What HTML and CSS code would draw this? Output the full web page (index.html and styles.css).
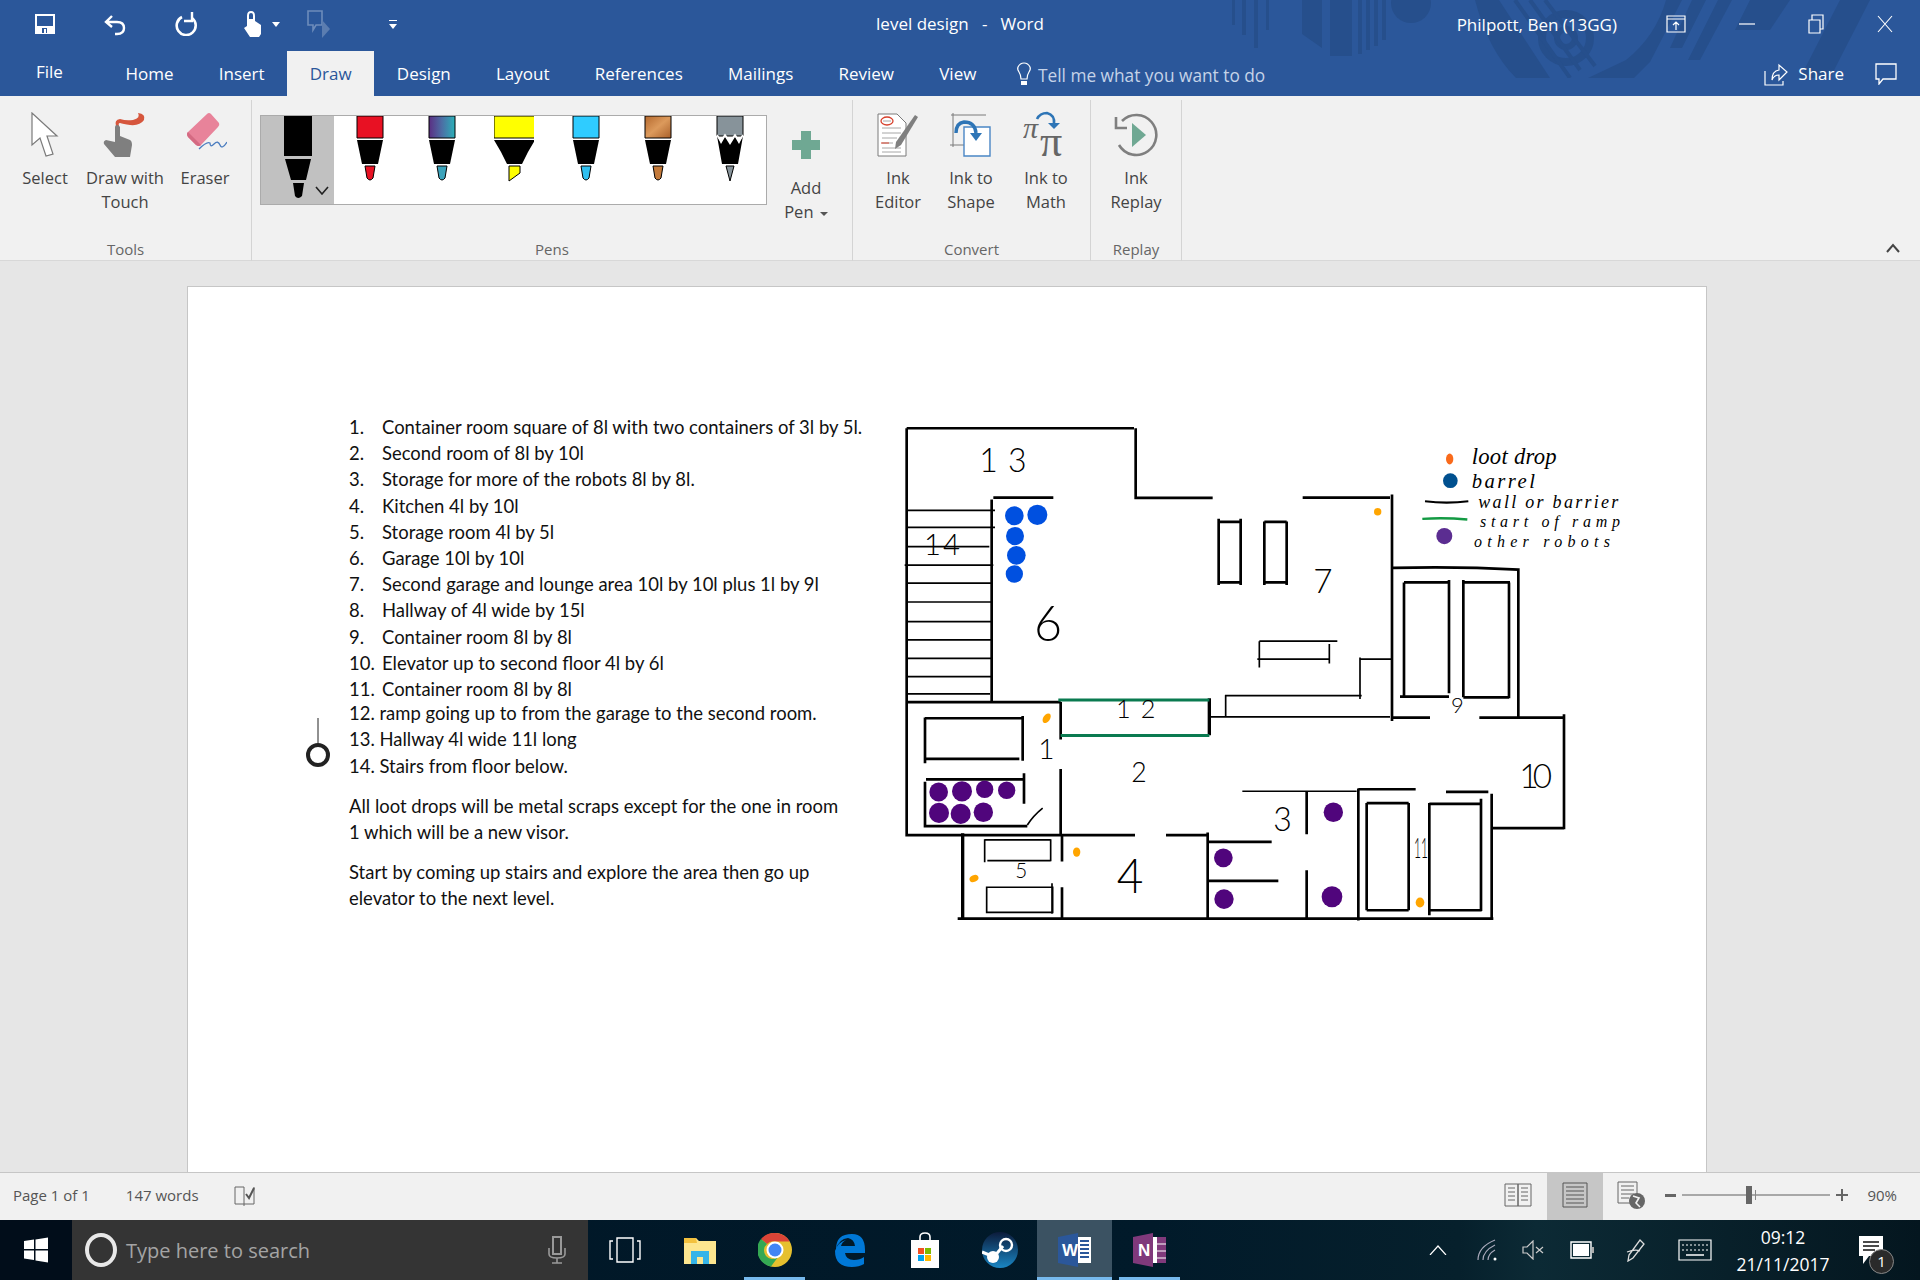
FILE: index.html
```html
<!DOCTYPE html>
<html lang="en">
<head>
    <meta charset="UTF-8">
    <title>level design - Word</title>
    <link rel="stylesheet" href="styles.css">
</head>
<body>
    <header class="titlebar">
        <!-- circuit pattern behind the title -->
        <svg class="title-art" viewBox="0 0 690 78" width="690" height="78">
            <g fill="#264f8c">
                <rect x="2" y="0" width="3" height="25"/><rect x="12" y="0" width="4" height="35"/><rect x="24" y="0" width="4" height="48"/><rect x="36" y="0" width="3" height="30"/>
                <path d="M72 0H92V48L72 34Z"/>
                <path d="M100 0H122V56H100Z"/>
                <rect x="128" y="0" width="4" height="54"/><rect x="136" y="0" width="4" height="50"/><rect x="144" y="0" width="4" height="46"/><rect x="152" y="0" width="4" height="40"/>
                <circle cx="181" cy="3" r="20"/>
                <path d="M245 0H269L320 78H286Q258 50 245 0Z"/>
                <path d="M436 0H452L420 62L404 78H358L396 60Q426 36 436 0Z"/>
                <path d="M462 0H476L452 48H440Z"/><path d="M488 0H502L470 60H458Z"/><path d="M520 0H560L540 30H505Z"/>
                <path d="M610 0H640L600 78H570Z"/>
            </g>
            <g fill="none" stroke="#264f8c">
                <circle cx="336" cy="38" r="24" stroke-width="8"/>
                <circle cx="336" cy="38" r="9" stroke-width="6"/>
                <path d="M285 0L340 78M300 0L350 70M315 0L365 66" stroke-width="4"/>
            </g>
        </svg>

        <div class="qat">
            <svg class="qat-icon" width="20" height="20" viewBox="0 0 20 20"><path d="M1 1H19V19H1Z" fill="none" stroke="#fff" stroke-width="2"/><path d="M1 12H19V19H1Z" fill="#fff"/><path d="M7 14H12V19H7Z" fill="#2b579a"/><path d="M9 15H11V19H9Z" fill="#fff"/></svg>
            <svg class="qat-icon" width="24" height="24" viewBox="0 0 24 24"><path d="M9 4L3 10L9 15M3 10H14Q21 10 21 16T14 22H12" fill="none" stroke="#fff" stroke-width="2.4"/></svg>
            <svg class="qat-icon" width="24" height="24" viewBox="0 0 24 24"><path d="M8 5A9.500 9.500 0 1 0 18 6" fill="none" stroke="#fff" stroke-width="2.6"/><path d="M18 0V9H10" fill="none" stroke="#fff" stroke-width="2.4"/></svg>
            <svg class="qat-icon" width="22" height="28" viewBox="0 0 22 28"><path d="M6 6Q6 1 10 1T14 6V11L20 15V24L18 27H9L3 18L6 16Z" fill="#fff"/><path d="M8 5Q8 3 10 3T12 5V9H8Z" fill="#2b579a"/></svg>
            <span class="qat-caret"></span>
            <svg class="qat-icon qat-off" width="26" height="28" viewBox="0 0 26 28"><path d="M2 1H16V15H10L7 20V15H2Z" fill="none" stroke="#6d8cbb" stroke-width="1.6"/><path d="M16 10L24 19L16 28Z" fill="#5b7db0"/></svg>
            <span class="qat-more"></span>
        </div>

        <div class="doc-title">level design &nbsp;&nbsp;- &nbsp;&nbsp;Word</div>

        <div class="win-controls">
            <span class="account">Philpott, Ben (13GG)</span>
            <svg class="win-btn win-display" width="20" height="18" viewBox="0 0 20 18"><path d="M1 1H19V17H1ZM1 4H19M10 15V7M7 10L10 7L13 10" fill="none" stroke="#fff" stroke-width="1.2"/></svg>
            <svg class="win-btn" width="16" height="16" viewBox="0 0 16 16"><path d="M0 8H16" stroke="#fff" stroke-width="1.2"/></svg>
            <svg class="win-btn" width="16" height="20" viewBox="0 0 16 20"><path d="M1 6H12V19H1ZM4 6V1H15V15H12" fill="none" stroke="#fff" stroke-width="1.2"/></svg>
            <svg class="win-btn" width="16" height="18" viewBox="0 0 16 18"><path d="M1 1L15 17M15 1L1 17" stroke="#fff" stroke-width="1.1"/></svg>
        </div>

        <nav class="tabs">
            <span class="tab tab-file">File</span>
            <span class="tab">Home</span>
            <span class="tab">Insert</span>
            <span class="tab tab-active">Draw</span>
            <span class="tab">Design</span>
            <span class="tab">Layout</span>
            <span class="tab">References</span>
            <span class="tab">Mailings</span>
            <span class="tab">Review</span>
            <span class="tab">View</span>
            <svg class="bulb" width="16" height="24" viewBox="0 0 16 24"><path d="M5 17Q5 13 3 10Q1 7 2 5Q4 1 8 1T14 5Q15 7 13 10Q11 13 11 17Z" fill="none" stroke="#fff" stroke-width="1.2"/><path d="M5 19H11V23H5Z" fill="#fff"/></svg>
            <span class="tell-me">Tell me what you want to do</span>
            <span class="share">
                <svg width="24" height="24" viewBox="0 0 24 24"><path d="M1 9V23H19V19M8 18Q8 9 15 8V3L23 10L15 18V13Q10 13 8 18Z" fill="none" stroke="#fff" stroke-width="1.2"/></svg>
                Share
            </span>
            <svg class="comment" width="22" height="22" viewBox="0 0 22 22"><path d="M1 1H21V16H8L4 21V16H1Z" fill="none" stroke="#fff" stroke-width="1.3"/></svg>
        </nav>
    </header>

    <section class="ribbon">
        <div class="group group-tools">
            <div class="group-body">
                <div class="btn btn-select">
                    <svg class="btn-icon" width="28" height="46" viewBox="0 0 28 46"><path d="M1 1V33L9 26L15 44L22 42L16 24H26Z" fill="#fff" stroke="#7a7a7a" stroke-width="1.2"/></svg>
                    <span>Select</span>
                </div>
                <div class="btn btn-touch">
                    <svg class="btn-icon" width="46" height="46" viewBox="0 0 46 46"><path d="M14 14Q12 8 18 7Q24 9 31 8Q39 6 36 1Q44 2 42 8Q38 14 28 13Q21 12 18 11Q16 11 17 14Z" fill="#d6563d"/><path d="M13 15Q13 13 15 13T18 15V24L28 28Q30 29 30 33L28 45H13L2 32Q1 29 4 28L13 30Z" fill="#7f7f7f"/></svg>
                    <span>Draw with Touch</span>
                </div>
                <div class="btn btn-eraser">
                    <svg class="btn-icon" width="44" height="46" viewBox="0 0 44 46"><path d="M24 2Q26 0 28 2L36 11Q37 13 35 15L18 33Q16 35 13 33L5 25Q3 22 5 20Z" fill="#e8839a"/><path d="M5 20L18 33Q16 35 13 33L5 25Q3 22 5 20Z" fill="#d46a82"/><path d="M16 37Q24 29 27 31Q27 36 31 32T37 33T44 30" fill="none" stroke="#4a7cbf" stroke-width="1.3"/></svg>
                    <span>Eraser</span>
                </div>
            </div>
            <div class="group-label">Tools</div>
        </div>

        <div class="group group-pens">
            <div class="group-body">
                <div class="gallery">
                    <div class="pen-slot pen-current">
                        <svg width="40" height="88" viewBox="0 0 40 88"><path d="M6 0H34V40H6ZM7 43H33L28 64H13ZM15 67H26L24 80Q20 84 17 80Z" fill="#000"/></svg>
                        <svg class="pen-chevron" width="14" height="9" viewBox="0 0 14 9"><path d="M1 1L7 8L13 1" fill="none" stroke="#222" stroke-width="1.6"/></svg>
                    </div>
                    <div class="pen-slot">
                        <svg width="40" height="88" viewBox="0 0 40 88"><path d="M7 0H33V22H7Z" fill="#e81123" stroke="#000"/><path d="M7 24H33L28 48H12Z"/><path d="M15 50H25L23 62Q20 66 17 62Z" fill="#e81123" stroke="#000"/></svg>
                    </div>
                    <div class="pen-slot">
                        <svg width="40" height="88" viewBox="0 0 40 88"><defs><linearGradient id="galaxy" x1="0" x2="1" y1="0" y2="0"><stop offset="0" stop-color="#5b2e83"/><stop offset=".5" stop-color="#4c6fa5"/><stop offset="1" stop-color="#2bb0b8"/></linearGradient></defs><path d="M7 0H33V22H7Z" fill="url(#galaxy)" stroke="#000"/><path d="M7 24H33L28 48H12Z"/><path d="M15 50H25L23 62Q20 66 17 62Z" fill="#3ba3bb" stroke="#000"/></svg>
                    </div>
                    <div class="pen-slot">
                        <svg width="40" height="88" viewBox="0 0 40 88"><path d="M0 0H41V22H0Z" fill="#ffff00" stroke="#000"/><path d="M0 24H41L34 36L28 48H13L7 36Z"/><path d="M15 50H26V57L15 65Z" fill="#ffff00" stroke="#000"/></svg>
                    </div>
                    <div class="pen-slot">
                        <svg width="40" height="88" viewBox="0 0 40 88"><path d="M7 0H33V22H7Z" fill="#2fccff" stroke="#000"/><path d="M7 24H33L28 48H12Z"/><path d="M15 50H25L23 62Q20 66 17 62Z" fill="#2fc0f0" stroke="#000"/></svg>
                    </div>
                    <div class="pen-slot">
                        <svg width="40" height="88" viewBox="0 0 40 88"><defs><linearGradient id="wood" x1="0" x2="1" y1="0" y2="1"><stop offset="0" stop-color="#b5692e"/><stop offset=".5" stop-color="#dc9a5c"/><stop offset="1" stop-color="#a9602a"/></linearGradient></defs><path d="M7 0H33V22H7Z" fill="url(#wood)" stroke="#000"/><path d="M7 24H33L28 48H12Z"/><path d="M15 50H25L23 62Q20 66 17 62Z" fill="#c47a3a" stroke="#000"/></svg>
                    </div>
                    <div class="pen-slot">
                        <svg width="40" height="88" viewBox="0 0 40 88"><path d="M7 0H33V20H7Z" fill="#87939a" stroke="#000"/><path d="M7 20L11 28L15 21L20 29L25 21L29 28L33 20L28 48H12Z"/><path d="M7 19L11 25L15 19L20 26L25 19L29 25L33 19" fill="none" stroke="#fff" stroke-width="1.6"/><path d="M16 50H24L20 65Z" fill="#87939a" stroke="#000"/></svg>
                    </div>
                </div>
                <div class="btn btn-add">
                    <svg class="btn-icon" width="28" height="28" viewBox="0 0 28 28"><path d="M9 0H19V9H28V19H19V28H9V19H0V9H9Z" fill="#6fa893"/></svg>
                    <span>Add<br>Pen <i class="caret"></i></span>
                </div>
            </div>
            <div class="group-label">Pens</div>
        </div>

        <div class="group group-convert">
            <div class="group-body">
                <div class="btn btn-editor">
                    <svg class="btn-icon" width="42" height="44" viewBox="0 0 42 44"><path d="M1 1H20L29 10V43H1Z" fill="#fff" stroke="#7a7a7a"/><ellipse cx="10" cy="8" rx="6" ry="4" fill="none" stroke="#d6402c" stroke-width="1.3"/><path d="M6 8H14M5 15H24M5 20H24M5 25H20M5 30H16M5 35H24M5 39H24" stroke="#a6a6a6"/><path d="M4 30H12" stroke="#d6402c"/><path d="M38 2L41 4L24 32L18 36L19 29Z" fill="#7f7f7f"/></svg>
                    <span>Ink<br>Editor</span>
                </div>
                <div class="btn btn-shape">
                    <svg class="btn-icon" width="42" height="44" viewBox="0 0 42 44"><path d="M1 2H36M3 0V34M0 32H14" stroke="#7a7a7a" fill="none"/><path d="M14 14H40V43H14Z" fill="#fff" stroke="#4a86c5" stroke-width="1.4"/><path d="M6 20Q6 10 14 9Q25 9 26 20" fill="none" stroke="#2e75b6" stroke-width="3.4"/><path d="M20 20H32L26 28Z" fill="#2e75b6"/></svg>
                    <span>Ink to<br>Shape</span>
                </div>
                <div class="btn btn-math">
                    <svg class="btn-icon" width="46" height="62" viewBox="0 -8 46 62"><text class="math-small" x="0" y="26">π</text><text class="math-big" x="17" y="44">π</text><path d="M14 7Q17 1 24 1Q32 3 31 12" fill="none" stroke="#2e75b6" stroke-width="2.6"/><path d="M25 11H37L31 17Z" fill="#2e75b6"/></svg>
                    <span>Ink to<br>Math</span>
                </div>
            </div>
            <div class="group-label">Convert</div>
        </div>

        <div class="group group-replay">
            <div class="group-body">
                <div class="btn btn-replay">
                    <svg class="btn-icon" width="44" height="44" viewBox="0 0 44 44"><path d="M8 8A20 20 0 1 1 5 32" fill="none" stroke="#7f7f7f" stroke-width="2.6"/><path d="M2 4V15H13" fill="none" stroke="#7f7f7f" stroke-width="2.6"/><path d="M18 10L32 22L18 34Z" fill="#6fa893"/></svg>
                    <span>Ink<br>Replay</span>
                </div>
            </div>
            <div class="group-label">Replay</div>
        </div>

        <svg class="ribbon-collapse" width="14" height="10" viewBox="0 0 14 10"><path d="M1 9L7 2L13 9" fill="none" stroke="#444" stroke-width="2"/></svg>
    </section>

    <main class="doc-area">
        <article class="page">
            <!-- ink cursor sitting in the margin -->
            <svg class="ink-handle" width="24" height="50" viewBox="0 0 24 50"><path d="M12 0V25" stroke="#222"/><circle cx="12" cy="37" r="10" fill="none" stroke="#222" stroke-width="4"/></svg>

            <div class="doc-text">
                <ol class="room-list">
                    <li><b>1.</b>Container room square of 8l with two containers of 3l by 5l.</li>
                    <li><b>2.</b>Second room of 8l by 10l</li>
                    <li><b>3.</b>Storage for more of the robots 8l by 8l.</li>
                    <li><b>4.</b>Kitchen 4l by 10l</li>
                    <li><b>5.</b>Storage room 4l by 5l</li>
                    <li><b>6.</b>Garage 10l by 10l</li>
                    <li><b>7.</b>Second garage and lounge area 10l by 10l plus 1l by 9l</li>
                    <li><b>8.</b>Hallway of 4l wide by 15l</li>
                    <li><b>9.</b>Container room 8l by 8l</li>
                    <li><b>10.</b>Elevator up to second floor 4l by 6l</li>
                    <li><b>11.</b>Container room 8l by 8l</li>
                </ol>
                <div class="room-extra">
                    <p>12. ramp going up to from the garage to the second room.</p>
                    <p>13. Hallway 4l wide 11l long</p>
                    <p>14. Stairs from floor below.</p>
                </div>
                <p class="para">All loot drops will be metal scraps except for the one in room 1 which will be a new visor.</p>
                <p class="para">Start by coming up stairs and explore the area then go up elevator to the next level.</p>
            </div>

            <svg class="plan" width="750" height="530" viewBox="0 0 2250 1568" preserveAspectRatio="none">
                <g class="wall">
                    <path d="M50 54H732M737 54V260H968M50 54V912M310 259H490M305 265V862M50 864H512M512 864V975M512 1062V1258M50 864V1258H735M828 1258H950M953 1250V1505"/>
                    <path d="M953 1278H1145M953 1393H1165M203 1505H1810M516 1260V1336M516 1412V1503"/>
                    <path d="M105 912H398M105 910V1045M398 905V1038M105 1032H388M108 1093H402M402 1075V1165M105 1100V1235M105 1231H412"/>
                    <path d="M1238 259H1500M1506 250V920M1510 467Q1700 462 1885 472V910M1542 510V848M1542 510H1678M1677 503V838M1530 848H1677M1720 503V850M1720 510H1860M1857 510V853M1720 850H1857"/>
                    <path d="M1506 910H1620M1768 910H2022M2022 900V1240M1805 1237H2022M1805 1135V1505M1250 1130V1255M1250 1362V1505M1405 1120V1510M1405 1122H1577M1668 1130H1795"/>
                    <path d="M1430 1163V1480M1430 1163H1556M1556 1163V1480M1430 1480H1556M1618 1163V1495M1618 1165H1775M1773 1150V1482M1618 1480H1775M986 322V518M1052 322V518M986 331H1052M986 510H1052M1123 330V518M1190 330V518M1123 331H1190M1123 510H1190"/>
                    <path class="wall-heavy" d="M218 1252V1505M958 853V962"/>
                </g>
                <g class="wall-thin">
                    <path d="M50 297H315M50 347H315M50 404H298M44 459H310M50 512H305M50 568H305M50 626H305M50 680H305M50 735H305M50 789H305M50 840H300"/>
                    <path d="M412 1228Q430 1200 458 1178M284 1272H482M284 1270V1338M482 1270V1335M292 1333H482M290 1412H488V1486H290ZM486 1400V1490"/>
                    <path d="M960 908H1500M1007 843V908M1005 845H1415M1108 684V762M1108 684H1342M1102 737H1318M1318 692V750M1410 732V855M1410 737H1505M1057 1128H1400"/>
                </g>
                <path class="ramp" d="M505 858H958M512 963H958"/>
                <g fill="#0050e0">
                    <circle cx="373" cy="313" r="28"/><circle cx="442" cy="310" r="30"/><circle cx="375" cy="373" r="27"/><circle cx="379" cy="430" r="28"/><circle cx="373" cy="485" r="26"/>
                </g>
                <g fill="#50057c">
                    <circle cx="146" cy="1130" r="28"/><circle cx="216" cy="1128" r="30"/><circle cx="284" cy="1122" r="26"/><circle cx="350" cy="1125" r="26"/><circle cx="147" cy="1192" r="30"/><circle cx="212" cy="1195" r="30"/><circle cx="280" cy="1190" r="29"/>
                    <circle cx="1000" cy="1325" r="28"/><circle cx="1002" cy="1447" r="29"/><circle cx="1330" cy="1190" r="29"/><circle cx="1326" cy="1440" r="31"/>
                </g>
                <g fill="#ffa500">
                    <ellipse cx="470" cy="912" rx="10" ry="16" transform="rotate(35 470 912)"/><ellipse cx="560" cy="1308" rx="11" ry="14"/><ellipse cx="252" cy="1386" rx="10" ry="14" transform="rotate(65 252 1386)"/><circle cx="1463" cy="301" r="11"/><ellipse cx="1590" cy="1457" rx="13" ry="15"/>
                </g>
                <g class="room-no">
                    <text font-size="96" x="268" y="182" textLength="142">13</text>
                    <text font-size="88" x="102" y="430" textLength="108">14</text>
                    <text font-size="145" x="432" y="684">6</text>
                    <text font-size="76" x="678" y="912" textLength="118">12</text>
                    <text font-size="84" x="445" y="1034">1</text>
                    <text font-size="80" x="724" y="1100">2</text>
                    <text font-size="96" x="1150" y="1245">3</text>
                    <text font-size="138" x="680" y="1428">4</text>
                    <text font-size="62" x="376" y="1386">5</text>
                    <text font-size="100" x="1270" y="542">7</text>
                    <text font-size="66" x="1683" y="896">9</text>
                    <text font-size="100" x="1888" y="1118" textLength="98">10</text>
                    <text font-size="84" x="1572" y="1325" textLength="42" lengthAdjust="spacingAndGlyphs">11</text>
                </g>
                <ellipse cx="1679" cy="145" rx="11" ry="16" fill="#f96a1b"/>
                <circle cx="1681" cy="209" r="22" fill="#00508f"/>
                <path d="M1605 270Q1670 278 1735 270" fill="none" stroke="#000" stroke-width="6"/>
                <path d="M1597 322Q1665 318 1732 324" fill="none" stroke="#139a43" stroke-width="7"/>
                <circle cx="1663" cy="373" r="24" fill="#5b2d91"/>
                <g class="legend">
                    <text font-size="68" x="1745" y="160" textLength="255">loot drop</text>
                    <text font-size="62" x="1745" y="232" textLength="190">barrel</text>
                    <text font-size="54" x="1765" y="290" textLength="420">wall or barrier</text>
                    <text font-size="48" x="1770" y="346" textLength="420">start of ramp</text>
                    <text font-size="48" x="1752" y="404" textLength="408">other robots</text>
                </g>
            </svg>
        </article>
    </main>

    <footer class="statusbar">
        <span class="status-page">Page 1 of 1</span>
        <span class="status-words">147 words</span>
        <svg class="status-proof" width="22" height="22" viewBox="0 0 22 22"><path d="M10 3H1V20H10V22M10 3V20H20V3" fill="none" stroke="#666"/><path d="M12 10L15 14L20 4" fill="none" stroke="#555" stroke-width="2"/></svg>
        <div class="status-right">
            <svg class="view-read" width="28" height="26" viewBox="0 0 28 26"><path d="M1 2H14V24H1ZM14 2H27V24H14ZM4 6H11M4 10H11M4 14H11M4 18H11M17 6H24M17 10H24M17 14H24M17 18H24" fill="none" stroke="#666"/></svg>
            <div class="view-print"><svg width="26" height="26" viewBox="0 0 26 26"><path d="M1 1H25V25H1ZM4 5H22M4 9H22M4 13H22M4 17H22M4 21H22" fill="none" stroke="#555"/></svg></div>
            <svg class="view-web" width="28" height="28" viewBox="0 0 28 28"><path d="M1 1H20V22H1ZM4 5H17M4 9H17M4 13H17M4 17H12" fill="none" stroke="#666"/><circle cx="20" cy="20" r="8" fill="#666"/><path d="M16 15L22 17L19 22L23 26" fill="none" stroke="#f1f1f1" stroke-width="1.6"/></svg>
            <div class="zoom-control">
                <span class="zoom-minus"></span>
                <div class="zoom-track"><span class="zoom-tick"></span><span class="zoom-thumb"></span></div>
                <span class="zoom-plus"></span>
            </div>
            <span class="zoom-value">90%</span>
        </div>
    </footer>

    <footer class="taskbar">
        <div class="start">
            <svg width="26" height="26" viewBox="0 0 26 26"><path d="M1 4L11 2.6V12H1ZM12.5 2.4L25 .6V12H12.5ZM1 13.5H11V23L1 21.6ZM12.5 13.5H25V25.4L12.5 23.6Z" fill="#fff"/></svg>
        </div>
        <div class="search">
            <span class="cortana"></span>
            <span class="search-text">Type here to search</span>
            <svg class="mic" width="18" height="28" viewBox="0 0 18 28"><path d="M5 1H13V18H5Z" fill="none" stroke="#999" stroke-width="2"/><path d="M1 12V18Q1 22 9 22T17 18V12M9 22V27M4 27H14" fill="none" stroke="#999" stroke-width="1.6"/></svg>
        </div>
        <div class="task-apps">
            <div class="task-app"><svg width="32" height="26" viewBox="0 0 32 26"><path d="M8 1H24V25H8ZM4 4H1V22H4M28 4H31V22H28" fill="none" stroke="#fff" stroke-width="1.4"/></svg></div>
            <div class="task-app"><svg width="32" height="28" viewBox="0 0 32 28"><path d="M0 2H12L15 5H32V28H0Z" fill="#fde68f"/><path d="M0 2H12L13 7H0Z" fill="#f3c13e"/><path d="M7 15H25V28H19V21H13V28H7Z" fill="#35b4e8"/></svg></div>
            <div class="task-app is-open">
                <svg width="34" height="34" viewBox="0 0 34 34"><circle cx="17" cy="17" r="17" fill="#e6c02e"/><path d="M17 0A17 17 0 0 1 31.700 8.500H17A8.500 8.500 0 0 0 9 11L3 6A17 17 0 0 1 17 0Z" fill="#db4437"/><path d="M3 6A17 17 0 0 0 13 33.500L20 24A8.500 8.500 0 0 1 9 11Z" fill="#34a853"/><circle cx="17" cy="17" r="8.500" fill="#fff"/><circle cx="17" cy="17" r="6.500" fill="#4285f4"/></svg>
            </div>
            <div class="task-app"><svg width="32" height="34" viewBox="0 0 32 34"><path d="M2 16Q2 1 18 1Q31 1 31 17V20H11Q12 27 20 27Q26 27 30 24V31Q25 34 18 34Q1 34 1 18Q4 9 12 7Q8 9 7 13H21Q20 6 14 5Q5 6 2 16Z" fill="#0078d7"/></svg></div>
            <div class="task-app"><svg width="28" height="36" viewBox="0 0 28 36"><path d="M0 8H28V36H0Z" fill="#fff"/><path d="M9 9V5Q9 1 14 1T19 5V9" fill="none" stroke="#fff" stroke-width="1.6"/><path d="M7 16H13V22H7Z" fill="#f25022"/><path d="M14 16H20V22H14Z" fill="#7fba00"/><path d="M7 23H13V29H7Z" fill="#00a4ef"/><path d="M14 23H20V29H14Z" fill="#ffb900"/></svg></div>
            <div class="task-app"><svg width="36" height="36" viewBox="0 0 36 36"><defs><linearGradient id="steam" x1="0" x2="0" y1="0" y2="1"><stop offset="0" stop-color="#0c1b3a"/><stop offset="1" stop-color="#1a86c4"/></linearGradient></defs><circle cx="18" cy="18" r="18" fill="url(#steam)"/><path d="M0 20L12 25L21 14" fill="none" stroke="#fff" stroke-width="3"/><circle cx="24" cy="13" r="6" fill="none" stroke="#fff" stroke-width="2.4"/><circle cx="11" cy="25" r="6" fill="#fff"/></svg></div>
            <div class="task-app is-active"><svg width="34" height="34" viewBox="0 0 34 34"><path d="M20 0V34L0 30V4Z" fill="#2b579a"/><path d="M20 4H33V30H20Z" fill="#fff"/><path d="M22 8H31M22 12H31M22 16H31M22 20H31M22 24H31" stroke="#2b579a" stroke-width="2"/><text class="app-letter" x="4" y="23">W</text></svg></div>
            <div class="task-app is-open"><svg width="34" height="34" viewBox="0 0 34 34"><path d="M20 0V34L0 30V4Z" fill="#80397b"/><path d="M20 4H33V30H20Z" fill="#fff"/><path d="M24 4H33V30H24Z" fill="#80397b"/><path d="M24 11H33M24 18H33M24 25H33" stroke="#fff"/><text class="app-letter" x="5" y="23">N</text></svg></div>
        </div>
        <div class="tray">
            <svg class="tray-chevron" width="18" height="10" viewBox="0 0 18 10"><path d="M1 10L9 1L17 10" fill="none" stroke="#fff" stroke-width="1.2"/></svg>
            <svg class="tray-wifi" width="20" height="22" viewBox="0 0 20 22"><path d="M1 21Q1 8 18 1M6 21Q6 12 18 6M11 21Q11 15 18 11" fill="none" stroke="#aab" stroke-width="1.2"/><circle cx="18" cy="20" r="1.500" fill="#fff"/></svg>
            <svg class="tray-volume" width="22" height="20" viewBox="0 0 22 20"><path d="M1 7H5L11 1V19L5 13H1Z" fill="none" stroke="#ccc" stroke-width="1.2"/><path d="M14 7L21 13M21 7L14 13" stroke="#ccc" stroke-width="1.2"/></svg>
            <svg class="tray-battery" width="24" height="18" viewBox="0 0 24 18"><path d="M1 1H21V17H1Z" fill="none" stroke="#fff" stroke-width="1.4"/><path d="M3 3H19V15H3Z" fill="#fff"/><path d="M22 6H24V12H22Z" fill="#aaa"/></svg>
            <svg class="tray-pen" width="20" height="24" viewBox="0 0 20 24"><path d="M14 2L18 6L7 20L2 23L3 17ZM1 14Q9 11 14 13" fill="none" stroke="#ddd" stroke-width="1.3"/></svg>
            <svg class="tray-keys" width="34" height="22" viewBox="0 0 34 22"><path d="M1 1H33V21H1Z" fill="none" stroke="#fff" stroke-width="1.2"/><path d="M4 6H30M4 11H30" stroke="#fff" stroke-dasharray="2 2"/><path d="M8 16H26" stroke="#fff" stroke-width="1.5"/></svg>
            <div class="clock"><span>09:12</span><span>21/11/2017</span></div>
            <div class="notify">
                <svg width="24" height="28" viewBox="0 0 24 28"><path d="M0 0H24V20H10L4 28V20H0Z" fill="#fff"/><path d="M4 6H20M4 10H20M4 14H16" stroke="#111" stroke-width="1.4"/></svg>
                <span class="notify-badge">1</span>
            </div>
        </div>
    </footer>
</body>
</html>
```

FILE: styles.css
```css
*{box-sizing:border-box}
html,body{margin:0;padding:0}
body{
    width:1920px;
    height:1280px;
    overflow:hidden;
    display:flex;
    flex-direction:column;
    font-family:"Open Sans","Liberation Sans",sans-serif;
    font-size:16.5px;
    color:#444;
}

/* title bar + tabs */
.titlebar{
    position:relative;
    height:96px;
    flex:none;
    background:#2b579a;
    color:#fff;
    display:grid;
    grid-template-columns:1fr auto 1fr;
    grid-template-rows:48px 48px;
}
.title-art{position:absolute;left:1230px;top:0}
.qat{position:relative;display:flex;align-items:center;height:48px}
.qat-icon{flex:none}
.qat svg:nth-child(1){margin-left:35px}
.qat svg:nth-child(2){margin-left:48px}
.qat svg:nth-child(3){margin-left:47px}
.qat svg:nth-child(4){margin-left:43px}
.qat-caret{margin-left:9px;border:4px solid transparent;border-top:5px solid #fff;border-bottom:0}
.qat-off{margin-left:26px}
.qat-more{margin-left:57px;width:8px;height:8px;border-top:1px solid #fff;position:relative}
.qat-more:after{content:"";position:absolute;left:0;top:3px;border:4px solid transparent;border-top:5px solid #fff;border-bottom:0}
.doc-title{position:relative;align-self:center;font-size:17px;text-align:center;width:190px;margin-top:-1px;white-space:nowrap}
.win-controls{position:relative;display:flex;align-items:center;justify-content:flex-end}
.account{font-size:17px;margin-right:49px}
.win-btn{flex:none;margin-right:53px}
.win-btn:last-child{margin-right:27px}

.tabs{
    position:relative;
    grid-column:1 / 4;
    display:flex;
    align-items:stretch;
    height:45px;
    margin-top:3px;
    font-size:17px;
}
.tab{padding:0 22.6px;display:flex;align-items:center;color:#fff;padding-bottom:1px}
.tab-file{padding:0 40px 4px 36px}
.tab-active{background:#f1f1f1;color:#2b579a}
.bulb{align-self:center;margin:0 0 0 17px}
.tell-me{align-self:center;margin-left:6px;color:#c5d3e8;margin-top:4px;font-size:17.3px}
.share{margin-left:auto;margin-right:31px;display:flex;align-items:center;gap:10px;font-size:17px}
.comment{align-self:center;margin-right:23px}

/* ribbon */
.ribbon{
    position:relative;
    height:165px;
    flex:none;
    background:#f1f1f1;
    border-bottom:1px solid #d8d8d8;
    display:flex;
}
.group{
    height:161px;
    margin-top:4px;
    border-right:1px solid #d4d4d4;
    display:flex;
    flex-direction:column;
}
.group-tools{width:252px}
.group-pens{width:601px}
.group-convert{width:238px}
.group-replay{width:91px}
.group-body{flex:1;display:flex;position:relative}
.group-label{height:27px;line-height:30px;text-align:center;font-size:15px;color:#666}
.btn{
    display:flex;
    flex-direction:column;
    align-items:center;
    text-align:center;
    line-height:24px;
    color:#444;
}
.btn-icon{height:46px;flex:none;margin-top:12px;margin-bottom:8px}
.btn-select{width:82px;margin-left:4px}
.btn-touch{width:88px;margin-left:-5px}
.btn-eraser{margin-left:-5px;width:78px;padding-left:4px}

.gallery{
    width:507px;
    height:90px;
    margin:15px 0 0 8px;
    background:#fff;
    border:1px solid #ababab;
    display:flex;
}
.pen-slot{width:72px;flex:none;text-align:center;height:88px}
.pen-slot svg{display:block;margin:0 auto}
.pen-current{width:73px;background:#c1c1c1;position:relative}
.pen-chevron{position:absolute;right:5px;bottom:9px}
.btn-add{width:64px;margin-left:7px}
.btn-add .btn-icon{height:28px;margin-top:31px;margin-bottom:17px}
.caret{display:inline-block;vertical-align:middle;margin-left:2px;border:4px solid transparent;border-top:4px solid #555;border-bottom:0}

.btn-editor{width:74px;margin-left:8px}
.btn-shape{width:72px}
.btn-math{width:78px}
.btn-math .btn-icon{height:62px;margin-top:4px;margin-bottom:0}
.btn-replay{width:90px}
.math-small{font:italic 30px "Liberation Serif",serif;fill:#666}
.math-big{font:44px "Liberation Serif",serif;fill:#666}
.ribbon-collapse{position:absolute;right:20px;top:147px}

/* document */
.doc-area{
    flex:1;
    min-height:0;
    background:#e6e6e6;
    padding:25px 0 0 187px;
    overflow:hidden;
}
.page{
    position:relative;
    width:1520px;
    height:900px;
    background:#fff;
    border:1px solid #c6c6c6;
    display:flex;
    padding:123px 0 0 161px;
    font-family:Lato,"Liberation Sans",sans-serif;
    font-size:18.470px;
    line-height:26.2px;
    color:#111;
}
.ink-handle{position:absolute;left:118px;top:431px}
.doc-text{width:541px;flex:none;margin-top:4px}
.room-list{list-style:none;margin:0;padding:0}
.room-list li{display:flex;white-space:nowrap}
.room-list b{font-weight:normal;width:33px;flex:none}
.room-extra{margin-top:-2px}
.room-extra p{margin:0}
.para{margin:14px 0 0;width:497px}
.plan{flex:none}
.plan .wall{fill:none;stroke:#000;stroke-width:8}
.plan .wall-heavy{stroke-width:10}
.plan .wall-thin{fill:none;stroke:#000;stroke-width:5}
.plan .ramp{fill:none;stroke:#0a7a50;stroke-width:9}
.room-no text{font-family:Lato,Roboto,sans-serif;font-weight:300;fill:#000}
.legend text{font-family:"Liberation Serif",serif;font-style:italic;fill:#000}

/* status bar */
.statusbar{
    height:48px;
    flex:none;
    background:#f1f1f1;
    border-top:1px solid #c6c6c6;
    display:flex;
    align-items:center;
    font-size:15px;
    color:#555;
    padding-left:13px;
}
.status-page,.status-words{margin-bottom:3px}
.status-words{margin-left:36px}
.status-proof{margin-left:35px;margin-bottom:3px}
.status-right{margin-left:auto;display:flex;align-items:center;height:100%;padding-bottom:3px}
.view-read{margin-right:15px}
.view-print{width:56px;align-self:stretch;margin-bottom:-3px;padding-bottom:3px;background:#c6c6c6;display:flex;align-items:center;justify-content:center}
.view-web{margin-left:14px}
.zoom-control{display:flex;align-items:center;margin-left:20px}
.zoom-minus{width:11px;height:3px;background:#666}
.zoom-plus{width:12px;height:12px;background:linear-gradient(#666,#666) center/12px 2px no-repeat,linear-gradient(#666,#666) center/2px 12px no-repeat}
.zoom-track{position:relative;width:148px;height:2px;background:#a8a8a8;margin:0 6px}
.zoom-thumb{position:absolute;left:64px;top:-8px;width:6px;height:18px;background:#666}
.zoom-tick{position:absolute;left:73px;top:-4px;width:1px;height:10px;background:#888}
.zoom-value{margin-left:19px;margin-right:23px}

/* windows taskbar */
.taskbar{
    height:60px;
    flex:none;
    display:flex;
    align-items:stretch;
    color:#fff;
    background:linear-gradient(90deg,#001626 0%,#011a2a 60%,#06202c 76%,#0c2a35 80%,#04161f 100%);
}
.start{width:72px;flex:none;background:#010d1a;display:flex;align-items:center;justify-content:center}
.search{width:516px;flex:none;background:#343434;display:flex;align-items:center;position:relative}
.cortana{width:32px;height:34px;margin-left:13px;border-radius:50%;border:4px solid #e8e8e8}
.search-text{margin-left:9px;font-size:20px;color:#a4a4a4}
.mic{position:absolute;left:476px;top:16px}
.task-apps{display:flex;margin-left:-1px}
.task-app{width:75px;display:flex;align-items:center;justify-content:center;position:relative}
.task-app.is-open:after,.task-app.is-active:after{content:"";position:absolute;left:7px;right:7px;bottom:0;height:3px;background:#76b9ed}
.task-app.is-active{background:#3b5262}
.task-app.is-active:after{left:0;right:0}
.app-letter{font:bold 17px "Liberation Sans",sans-serif;fill:#fff}
.tray{margin-left:auto;display:flex;align-items:center;position:relative}
.tray-chevron{margin-right:30px}
.tray-wifi{margin-right:25px}
.tray-volume{margin-right:26px}
.tray-battery{margin-right:32px}
.tray-pen{margin-right:32px}
.tray-keys{margin-right:23px}
.clock{display:flex;flex-direction:column;align-items:center;font-size:17.500px;line-height:27px;width:96px;margin-top:2px;white-space:nowrap}
.notify{position:relative;width:65px;height:100%;display:flex;align-items:center;padding-left:28px;margin-right:24px}
.notify-badge{position:absolute;left:38px;top:29px;width:25px;height:25px;border-radius:50%;background:#2a2a2a;border:1px solid #888;font-size:15px;line-height:23px;text-align:center}
```
